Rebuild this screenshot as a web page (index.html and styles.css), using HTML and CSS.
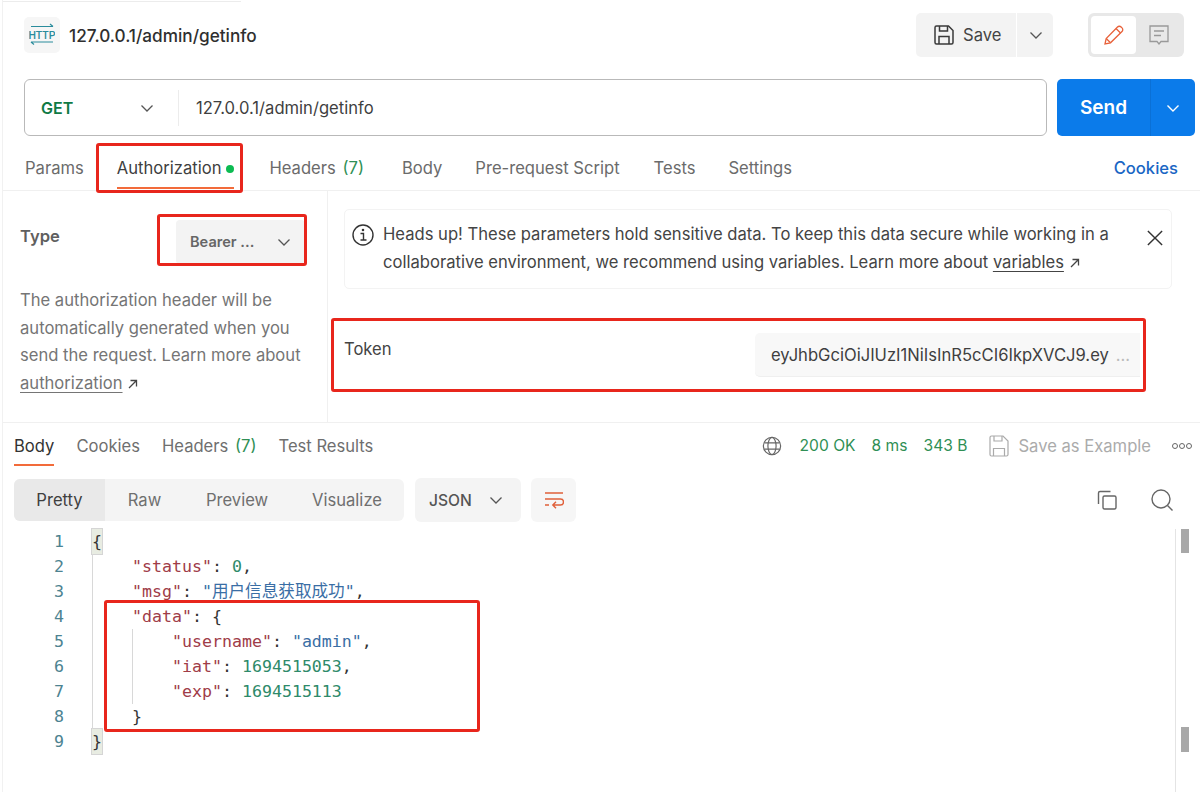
FILE: index.html
```html
<!DOCTYPE html>
<html>
<head>
  <meta charset="UTF-8">
  <title>127.0.0.1/admin/getinfo</title>
  <link rel="stylesheet" href="styles.css">
</head>
<body>
  <div class="page">
    <div class="top-row">
      <div class="req-icon">
        <svg width="26" height="26" viewBox="0 0 26 26" fill="none" stroke="#2a8c9c" stroke-width="1.2">
          <path d="M2 4.500h22M21 2l3 2.500"/>
          <path d="M2 20h22M5 22.500L2 20"/>
          <text x="13" y="16.500" text-anchor="middle" class="http-text">HTTP</text>
        </svg>
      </div>
      <div class="req-name">127.0.0.1/admin/getinfo</div>
      <div class="save-group">
        <button class="save-btn">
          <svg width="22" height="22" viewBox="0 0 22 22" fill="none" stroke="#3a3a3a" stroke-width="1.5">
            <path d="M2 3.500a1.500 1.500 0 0 1 1.500-1.500h12L20 6.500v12a1.500 1.500 0 0 1-1.500 1.500h-15A1.500 1.500 0 0 1 2 18.500z"/>
            <path d="M6.500 2v5h8V2M6 20v-7.500h10V20"/>
          </svg>
          Save
        </button>
        <button class="save-more">
          <svg width="14" height="14" viewBox="0 0 14 14" fill="none" stroke="#555" stroke-width="1.3"><path d="M1.500 4.500L7 10l5.500-5.500"/></svg>
        </button>
      </div>
      <div class="mode-switch">
        <div class="mode-item active">
          <svg width="22" height="22" viewBox="0 0 22 22" fill="none" stroke="#e8613a" stroke-width="1.3">
            <path d="M2 20l1.200-5.500L14.500 3a2.500 2.500 0 0 1 3.600 0l.9.9a2.500 2.500 0 0 1 0 3.600L7.500 18.800z"/>
            <path d="M13 4.500l4.500 4.500M3.200 14.500l4.300 4.300"/>
          </svg>
        </div>
        <div class="mode-item">
          <svg width="22" height="22" viewBox="0 0 22 22" fill="none" stroke="#999" stroke-width="1.3">
            <path d="M2 2h18v15.500h-7L11 20l-2-2.500H2z"/>
            <path d="M6 7h10M6 11.500h7"/>
          </svg>
        </div>
      </div>
    </div>

    <div class="url-row">
      <div class="url-box">
        <div class="method">
          <span>GET</span>
          <svg width="14" height="14" viewBox="0 0 14 14" fill="none" stroke="#555" stroke-width="1.3"><path d="M1.500 4.500L7 10l5.500-5.500"/></svg>
        </div>
        <div class="url-text">127.0.0.1/admin/getinfo</div>
      </div>
      <div class="send-btn">
        <div class="send-label">Send</div>
        <div class="send-more">
          <svg width="14" height="14" viewBox="0 0 14 14" fill="none" stroke="#fff" stroke-width="1.4"><path d="M1.500 4.500L7 10l5.500-5.500"/></svg>
        </div>
      </div>
    </div>

    <div class="req-tabs">
      <div class="tab">Params</div>
      <div class="tab tab-active">Authorization<span class="dot"></span></div>
      <div class="tab tab-headers">Headers <span class="count">(7)</span></div>
      <div class="tab">Body</div>
      <div class="tab tab-script">Pre-request Script</div>
      <div class="tab">Tests</div>
      <div class="tab">Settings</div>
      <div class="cookies-link">Cookies</div>
    </div>

    <div class="auth-pane">
      <div class="auth-left">
        <div class="type-row">
          <div class="type-label">Type</div>
          <div class="type-select">
            <span>Bearer ...</span>
            <svg width="14" height="14" viewBox="0 0 14 14" fill="none" stroke="#555" stroke-width="1.3"><path d="M1.500 4.500L7 10l5.500-5.500"/></svg>
          </div>
        </div>
        <p class="auth-help">The authorization header will be automatically generated when you send the request. Learn more about <a>authorization</a>
          <svg class="arrow-icon" width="10" height="10" viewBox="0 0 10 10" fill="none" stroke="#444" stroke-width="1.300"><path d="M1 9l7.500-7.500M2.500 1.500h6v6"/></svg></p>
      </div>
      <div class="auth-right">
        <div class="notice">
          <svg class="notice-icon" width="24" height="24" viewBox="0 0 24 24" fill="none" stroke="#333" stroke-width="1.400">
            <circle cx="12" cy="12" r="10"/>
            <path d="M9.500 10.500H12.500V17M9.500 17h6"/>
            <circle cx="12" cy="7" r=".6" fill="#333"/>
          </svg>
          <div class="notice-text">Heads up! These parameters hold sensitive data. To keep this data secure while working in a collaborative environment, we recommend using variables. Learn more about <a>variables</a>
            <svg class="arrow-icon" width="10" height="10" viewBox="0 0 10 10" fill="none" stroke="#444" stroke-width="1.300"><path d="M1 9l7.500-7.500M2.500 1.500h6v6"/></svg></div>
          <svg class="notice-close" width="16" height="16" viewBox="0 0 18 18" fill="none" stroke="#333" stroke-width="1.600"><path d="M1 1l16 16M17 1L1 17"/></svg>
        </div>
        <div class="token-row">
          <div class="token-label">Token</div>
          <div class="token-input">eyJhbGciOiJIUzI1NiIsInR5cCI6IkpXVCJ9.ey<span class="token-fade">...</span></div>
        </div>
      </div>
    </div>

    <div class="res-tabs">
      <div class="res-tab res-tab-active">Body</div>
      <div class="res-tab">Cookies</div>
      <div class="res-tab">Headers <span class="count">(7)</span></div>
      <div class="res-tab">Test Results</div>
      <div class="res-meta">
        <svg width="20" height="20" viewBox="0 0 22 22" fill="none" stroke="#666" stroke-width="1.300">
          <circle cx="11" cy="11" r="9.500"/>
          <ellipse cx="11" cy="11" rx="4.500" ry="9.500"/>
          <path d="M2.500 7.500h17M2.500 14.500h17"/>
        </svg>
        <span class="res-stat first">200 OK</span>
        <span class="res-stat">8 ms</span>
        <span class="res-stat">343 B</span>
        <svg class="save-ex-icon" width="20" height="22" viewBox="0 0 20 22" fill="none" stroke="#aaa" stroke-width="1.200">
          <path d="M1 2.500A1.500 1.500 0 0 1 2.500 1H14l5 5v13.500a1.500 1.500 0 0 1-1.500 1.500h-15A1.500 1.500 0 0 1 1 19.500z"/>
          <path d="M5 1v5h8V1M4.500 21v-7.500h11V21"/>
        </svg>
        <span class="save-example">Save as Example</span>
        <span class="more-dots"><i></i><i></i><i></i></span>
      </div>
    </div>

    <div class="res-toolbar">
      <div class="view-tabs">
        <div class="view-tab view-active">Pretty</div>
        <div class="view-tab">Raw</div>
        <div class="view-tab">Preview</div>
        <div class="view-tab">Visualize</div>
      </div>
      <div class="format-select">
        <span>JSON</span>
        <svg width="14" height="14" viewBox="0 0 14 14" fill="none" stroke="#555" stroke-width="1.3"><path d="M1.500 4.500L7 10l5.500-5.500"/></svg>
      </div>
      <div class="wrap-btn">
        <svg width="20" height="20" viewBox="0 0 20 20" fill="none" stroke="#e0603a" stroke-width="1.400">
          <path d="M1 3h18M1 9h15.500a2.700 2.700 0 0 1 0 6H9M12 11.800L8.800 15l3.200 3.200M1 15h4"/>
        </svg>
      </div>
      <div class="toolbar-right">
        <svg width="22" height="22" viewBox="0 0 22 22" fill="none" stroke="#666" stroke-width="1.400">
          <rect x="7" y="7" width="13" height="13" rx="1.500"/>
          <path d="M14.500 2.500H4A1.500 1.500 0 0 0 2.500 4v11"/>
        </svg>
        <svg width="24" height="24" viewBox="0 0 24 24" fill="none" stroke="#666" stroke-width="1.400">
          <circle cx="11" cy="11" r="9"/>
          <path d="M17.500 17.500l5 5"/>
        </svg>
      </div>
    </div>

    <div class="code-area">
      <div class="gutter">
        <div>1</div><div>2</div><div>3</div><div>4</div><div>5</div><div>6</div><div>7</div><div>8</div><div>9</div>
      </div>
      <div class="code">
        <div class="line"><span class="brace-hit">{</span></div>
        <div class="line i1"><span class="key">"status"</span>: <span class="num">0</span>,</div>
        <div class="line i1"><span class="key">"msg"</span>: <span class="str">"用户信息获取成功"</span>,</div>
        <div class="line i1"><span class="key">"data"</span>: {</div>
        <div class="line i2"><span class="key">"username"</span>: <span class="str">"admin"</span>,</div>
        <div class="line i2"><span class="key">"iat"</span>: <span class="num">1694515053</span>,</div>
        <div class="line i2"><span class="key">"exp"</span>: <span class="num">1694515113</span></div>
        <div class="line i1">}</div>
        <div class="line"><span class="brace-hit">}</span></div>
        <div class="guide guide-outer"></div>
        <div class="guide guide-inner"></div>
      </div>
      <div class="scroll-side">
        <div class="scroll-thumb"></div>
        <div class="scroll-thumb scroll-thumb-low"></div>
      </div>
    </div>

    <div class="mark mark-auth"></div>
    <div class="mark mark-type"></div>
    <div class="mark mark-token"></div>
    <div class="mark mark-data"></div>
  </div>
</body>
</html>
```

FILE: styles.css
```css
* {
  box-sizing: border-box;
}
body {
  margin: 0;
  font-family: Inter, "Noto Sans", sans-serif;
  font-size: 16.6px;
  color: #3a3a3a;
  background: #fff;
}
svg {
  flex: none;
  display: block;
}
button {
  font-family: inherit;
  border: none;
}
.page {
  position: relative;
  width: 1198px;
  height: 792px;
  margin-left: 2px;
  overflow: hidden;
  border-left: 1px solid #f1f1f1;
}

/* top row */
.top-row {
  display: flex;
  align-items: center;
  height: 70px;
  padding: 0 16px 0 21px;
  background: linear-gradient(#ececec, #ececec) no-repeat 0 1px / 238px 1px;
}
.req-icon {
  width: 36px;
  height: 36px;
  background: #f6f6f6;
  border-radius: 5px;
  display: flex;
  align-items: center;
  justify-content: center;
}
.http-text {
  font-family: Roboto, sans-serif;
  font-size: 10.5px;
  font-weight: 500;
  fill: #2a8c9c;
  stroke: none;
}
.req-name {
  margin-left: 9px;
  font-size: 17.2px;
  font-weight: 500;
  color: #2f2f2f;
  flex: 1;
}
.save-group {
  display: flex;
  height: 44px;
}
.save-btn {
  display: flex;
  align-items: center;
  gap: 8px;
  width: 100px;
  padding: 0 0 0 17px;
  background: #f3f3f3;
  border-radius: 5px 0 0 5px;
  font-size: 16.6px;
  color: #444;
}
.save-more {
  width: 36px;
  margin-left: 1px;
  padding: 0 0 0 12px;
  background: #f3f3f3;
  border-radius: 0 5px 5px 0;
}
.mode-switch {
  display: flex;
  margin-left: 35px;
  height: 44px;
  padding: 3px;
  background: #e8e8e8;
  border-radius: 6px;
}
.mode-item {
  width: 45px;
  display: flex;
  align-items: center;
  justify-content: center;
  border-radius: 4px;
}
.mode-item.active {
  background: #fff;
}

/* url row */
.url-row {
  display: flex;
  height: 57px;
  margin-top: 9px;
  padding: 0 5px 0 21px;
  gap: 10px;
}
.url-box {
  flex: 1;
  display: flex;
  align-items: center;
  border: 1px solid #b9b9b9;
  border-radius: 6px;
}
.method {
  width: 154px;
  height: 36px;
  padding: 0 24px 0 16px;
  display: flex;
  align-items: center;
  justify-content: space-between;
  border-right: 1px solid #ececec;
  font-size: 16px;
  font-weight: 600;
  color: #0f7a45;
}
.url-text {
  padding-left: 17px;
  color: #3f3f3f;
}
.send-btn {
  width: 138px;
  display: flex;
  align-items: center;
  background: #0b7bea;
  border-radius: 5px;
  color: #fff;
}
.send-label {
  width: 93px;
  text-align: center;
  font-size: 19px;
  font-weight: 600;
}
.send-more {
  height: 100%;
  flex: 1;
  display: flex;
  align-items: center;
  justify-content: center;
  border-left: 1px solid #0a70d6;
}

/* request tabs */
.req-tabs {
  display: flex;
  align-items: center;
  height: 55px;
  padding: 10px 22px 0 22px;
  gap: 33px;
  border-bottom: 1px solid #f0f0f0;
  color: #6b6b6b;
}
.tab {
  position: relative;
  white-space: nowrap;
}
.tab-active {
  color: #3f3f3f;
  margin-right: 2px;
}
.tab-active::after {
  content: "";
  position: absolute;
  left: 0;
  right: 0;
  bottom: -11px;
  height: 2px;
  background: #f26b3a;
}
.tab-headers {
  margin-right: 5px;
}
.tab-script {
  margin-right: 1px;
}
.dot {
  display: inline-block;
  width: 8px;
  height: 8px;
  margin-left: 5px;
  border-radius: 50%;
  background: #0cbb52;
  vertical-align: 1px;
}
.count {
  color: #2f8f55;
  margin-left: 2px;
}
.cookies-link {
  margin-left: auto;
  color: #1a66c4;
  font-weight: 500;
}

/* auth */
.auth-pane {
  display: flex;
  height: 232px;
  border-bottom: 1px solid #f0f0f0;
}
.auth-left {
  width: 325px;
  padding: 22px 22px 0 17px;
  border-right: 1px solid #f0f0f0;
}
.type-row {
  display: flex;
  justify-content: space-between;
  align-items: flex-start;
}
.type-label {
  margin-top: 13px;
  font-weight: 600;
  color: #5f5f5f;
}
.type-select {
  width: 129px;
  height: 44px;
  margin-top: 7px;
  padding: 0 14px;
  display: flex;
  align-items: center;
  justify-content: space-between;
  background: #f3f3f3;
  border-radius: 4px;
  font-size: 14.6px;
  font-weight: 600;
  color: #666;
}
.auth-help {
  margin: 23px 0 0;
  line-height: 27.5px;
  color: #757575;
}
.auth-help a,
.notice-text a {
  text-decoration: underline;
  text-underline-offset: 3px;
}
.arrow-icon {
  display: inline-block;
  margin-left: 1px;
}
.auth-right {
  flex: 1;
  padding: 18px 28px 0 16px;
}
.notice {
  position: relative;
  height: 80px;
  padding: 10px 50px 0 38px;
  border: 1px solid #f3f3f3;
  border-radius: 5px;
}
.notice-icon {
  position: absolute;
  left: 6px;
  top: 13px;
}
.notice-close {
  position: absolute;
  right: 8px;
  top: 20px;
}
.notice-text {
  line-height: 28px;
  color: #444;
}
.token-row {
  display: flex;
  justify-content: space-between;
  margin-top: 44px;
  margin-right: 32px;
}
.token-label {
  margin-top: 6px;
  color: #444;
}
.token-input {
  width: 385px;
  height: 44px;
  padding: 0 0 0 16px;
  display: flex;
  align-items: center;
  white-space: pre;
  overflow: hidden;
  background: #f8f8f8;
  border-radius: 5px 0 0 5px;
  border-bottom: 1px solid #efefef;
  color: #3f3f3f;
}
.token-fade {
  margin-left: 7px;
  color: #bbb;
}

/* response */
.res-tabs {
  display: flex;
  align-items: center;
  height: 45px;
  padding: 0 8px 0 11px;
  gap: 22px;
  color: #6f6f6f;
}
.res-tab {
  position: relative;
  white-space: nowrap;
}
.res-tab-active {
  color: #333;
}
.res-tab-active::after {
  content: "";
  position: absolute;
  left: 0;
  right: 0;
  bottom: -10px;
  height: 2px;
  background: #f26b3a;
}
.res-meta {
  margin-left: auto;
  display: flex;
  align-items: center;
  font-size: 15.6px;
}
.res-stat {
  color: #2f8f55;
  margin-left: 16px;
}
.res-stat.first {
  margin-left: 18px;
}
.save-ex-icon {
  margin-left: 22px;
}
.save-example {
  margin-left: 9px;
  font-size: 16.6px;
  color: #ababab;
}
.more-dots {
  display: flex;
  gap: 1px;
  margin-left: 21px;
}
.more-dots i {
  width: 6px;
  height: 6px;
  border: 1px solid #666;
  border-radius: 50%;
}
.res-toolbar {
  display: flex;
  align-items: center;
  height: 42px;
  margin-top: 11px;
  padding: 0 26px 0 11px;
}
.view-tabs {
  display: flex;
  width: 390px;
  height: 42px;
  background: #f4f4f4;
  border-radius: 6px;
  color: #6f6f6f;
  overflow: hidden;
}
.view-tab {
  display: flex;
  align-items: center;
  justify-content: center;
}
.view-tab:nth-child(1) {
  width: 91px;
}
.view-tab:nth-child(2) {
  width: 79px;
}
.view-tab:nth-child(3) {
  width: 106px;
}
.view-tab:nth-child(4) {
  width: 114px;
}
.view-active {
  background: #e9e9e9;
  color: #3f3f3f;
}
.format-select {
  display: flex;
  align-items: center;
  gap: 17px;
  width: 106px;
  height: 44px;
  margin-left: 11px;
  padding-left: 14px;
  background: #f4f4f4;
  border-radius: 6px;
  font-size: 15.6px;
  font-weight: 500;
  color: #555;
}
.wrap-btn {
  width: 45px;
  height: 44px;
  margin-left: 10px;
  display: flex;
  align-items: center;
  justify-content: center;
  background: #f6f6f6;
  border-radius: 6px;
}
.toolbar-right {
  margin-left: auto;
  display: flex;
  align-items: center;
  gap: 32px;
}

/* code */
.code-area {
  display: flex;
  margin-top: 8px;
  height: 264px;
}
.gutter {
  width: 61px;
  text-align: right;
  color: #4d8391;
  font-family: "DejaVu Sans Mono", monospace;
  font-size: 16.6px;
  line-height: 25px;
}
.code {
  position: relative;
  flex: 1;
  margin-left: 28px;
  font-family: "DejaVu Sans Mono", "Noto Sans CJK SC", monospace;
  font-size: 16.6px;
  line-height: 25px;
  color: #333;
}
.line {
  height: 25px;
  white-space: pre;
}
.line.i1 {
  padding-left: 40px;
}
.line.i2 {
  padding-left: 80px;
}
.key {
  color: #a03c48;
}
.str {
  color: #3a6ea5;
}
.num {
  color: #2e8a6a;
}
.brace-hit {
  display: inline-block;
  height: 25px;
  background: #e8ece2;
  outline: 1px solid #d5d5d5;
}
.guide {
  position: absolute;
  width: 1px;
  background: #d8d8d8;
}
.guide-outer {
  left: 0;
  top: 25px;
  height: 175px;
}
.guide-inner {
  left: 40px;
  top: 100px;
  height: 75px;
}
.scroll-side {
  position: relative;
  width: 25px;
  border-left: 1px solid #e4e4e4;
}
.scroll-thumb {
  position: absolute;
  left: 5px;
  top: 0;
  width: 8px;
  height: 24px;
  background: #a8a8a8;
}
.scroll-thumb-low {
  top: 198px;
  height: 25px;
}

/* red annotation boxes */
.mark {
  position: absolute;
  border: 3px solid #e8261c;
  border-radius: 3px;
}
.mark-auth {
  left: 93px;
  top: 143px;
  width: 147px;
  height: 50px;
}
.mark-type {
  left: 154px;
  top: 214px;
  width: 150px;
  height: 52px;
}
.mark-token {
  left: 328px;
  top: 318px;
  width: 815px;
  height: 74px;
}
.mark-data {
  left: 101px;
  top: 600px;
  width: 376px;
  height: 132px;
}
```
